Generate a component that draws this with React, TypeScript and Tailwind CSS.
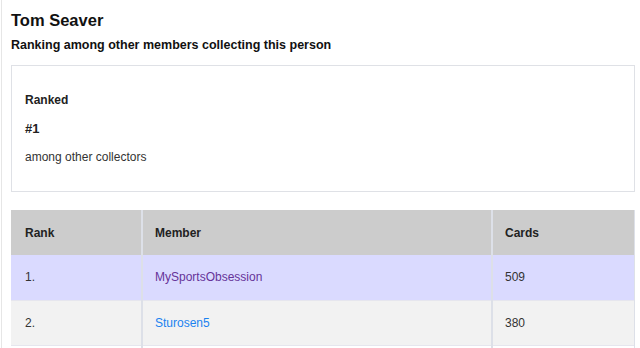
import React from "react";

export default function App() {
  const font = { fontFamily: '"Liberation Sans", Arial, sans-serif' };
  return (
    <div className="w-[640px] h-[348px] bg-white overflow-hidden" style={font}>
      <div className="ml-[1px] border-l border-[#e6e6e6] h-full pl-[9px] pr-[5px]">
        <h1 className="pt-[10px] text-[16.5px] leading-[20px] font-bold text-[#111]">Tom Seaver</h1>
        <h2 className="mt-[5px] text-[12.5px] leading-[20px] font-bold text-[#111]">
          Ranking among other members collecting this person
        </h2>
        <div className="mt-[10px] w-[624px] border border-[#dfe1e6] px-[13px] pt-[26px] pb-[26px]">
          <div className="text-[12px] leading-[16px] font-bold text-[#222]">Ranked</div>
          <div className="mt-[13px] text-[13px] leading-[16px] font-bold text-[#222]">#1</div>
          <div className="mt-[12px] text-[12px] leading-[16px] text-[#333]">among other collectors</div>
        </div>
        <table className="mt-[18px] w-[624px] border-collapse text-[12px] table-fixed">
          <thead>
            <tr className="bg-[#cccccc] h-[45px]">
              <th className="w-[131px] text-left font-bold text-[#222] pl-[14px] border-r-2 border-[#dde0e8]">Rank</th>
              <th className="w-[350px] text-left font-bold text-[#222] pl-[12px] border-r-2 border-[#dde0e8]">Member</th>
              <th className="text-left font-bold text-[#222] pl-[12px] border-r border-[#dde0e8]">Cards</th>
            </tr>
          </thead>
          <tbody>
            <tr className="bg-[#dadaff] h-[45px] border-b border-[#e6e6ee]">
              <td className="pl-[14px] text-[#333] border-r-2 border-[#dde0e8]">1.</td>
              <td className="pl-[12px] text-[#663399] border-r-2 border-[#dde0e8]">MySportsObsession</td>
              <td className="pl-[12px] text-[#333] border-r border-[#dde0e8]">509</td>
            </tr>
            <tr className="bg-[#f2f2f2] h-[45px] border-b border-[#e6e6ee]">
              <td className="pl-[14px] text-[#333] border-r-2 border-[#dde0e8]">2.</td>
              <td className="pl-[12px] text-[#1a82f0] border-r-2 border-[#dde0e8]">Sturosen5</td>
              <td className="pl-[12px] text-[#333] border-r border-[#dde0e8]">380</td>
            </tr>
            <tr className="h-[45px]">
              <td className="border-r-2 border-[#dde0e8]"></td>
              <td className="border-r-2 border-[#dde0e8]"></td>
              <td className="border-r border-[#dde0e8]"></td>
            </tr>
          </tbody>
        </table>
      </div>
    </div>
  );
}
